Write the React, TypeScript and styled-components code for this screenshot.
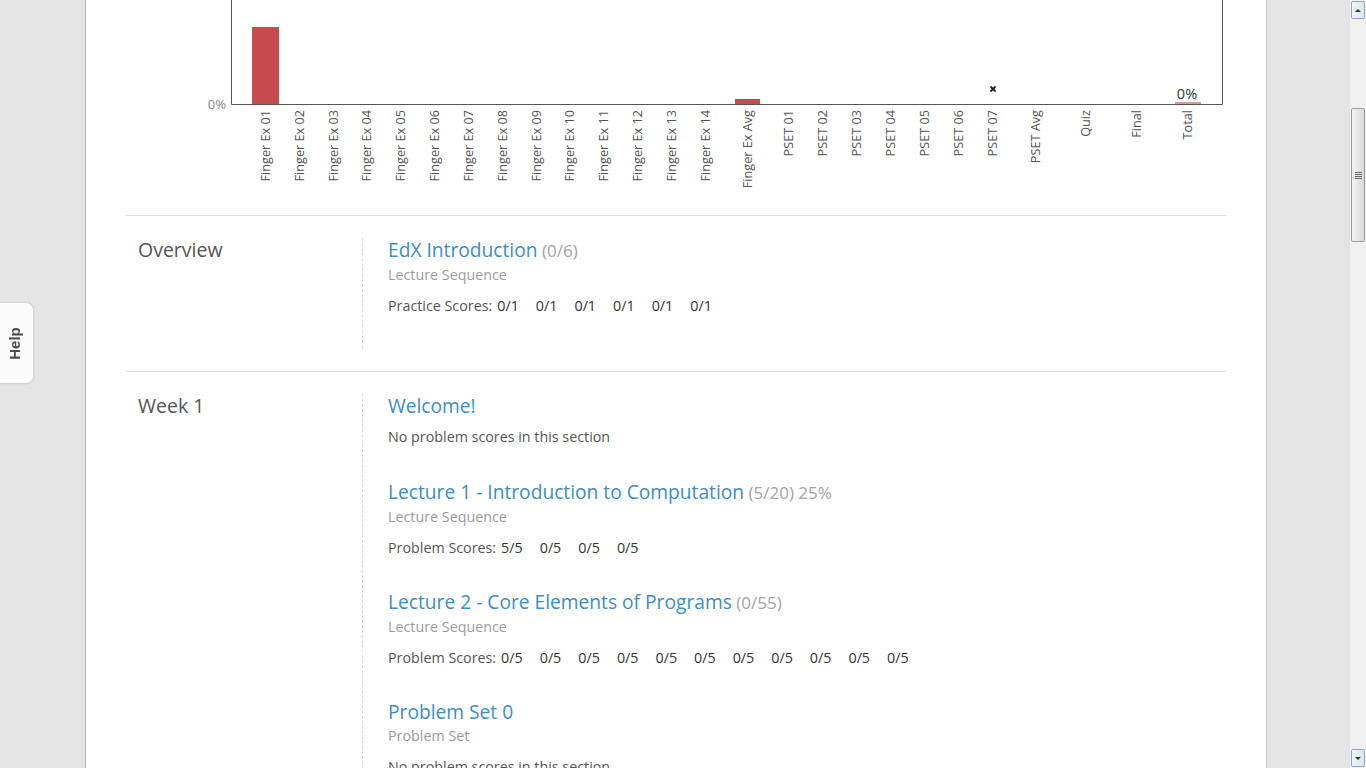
import {FC} from "react"
import styled, {createGlobalStyle} from "styled-components"

const GlobalStyle = createGlobalStyle`
    html, body {
        margin: 0;
        padding: 0;
        overflow: hidden;
        background: #e4e4e4;
        font-family: "Open Sans", "Liberation Sans", sans-serif;
    }
`

interface Score {
    label: string
    x: number
}

interface Item {
    title: string
    count?: string
    kind?: string
    scoreLabel?: string
    scores?: string[]
}

interface Chapter {
    name: string
    items: Item[]
}

const LABEL_X = [266, 300, 334, 367, 401, 435, 469, 503, 537, 570, 604, 638, 672, 706]
const PSET_X = [789, 823, 857, 891, 925, 959, 993]

const chartLabels: Score[] = [
    ...LABEL_X.map((x, i) => ({label: `Finger Ex ${String(i + 1).padStart(2, "0")}`, x})),
    {label: "Finger Ex Avg", x: 748},
    ...PSET_X.map((x, i) => ({label: `PSET 0${i + 1}`, x})),
    {label: "PSET Avg", x: 1036},
    {label: "Quiz", x: 1086},
    {label: "Final", x: 1137},
    {label: "Total", x: 1188},
]

const chapters: Chapter[] = [
    {
        name: "Overview",
        items: [
            {
                title: "EdX Introduction",
                count: "(0/6)",
                kind: "Lecture Sequence",
                scoreLabel: "Practice Scores:",
                scores: ["0/1", "0/1", "0/1", "0/1", "0/1", "0/1"]
            }
        ]
    },
    {
        name: "Week 1",
        items: [
            {title: "Welcome!"},
            {
                title: "Lecture 1 - Introduction to Computation",
                count: "(5/20) 25%",
                kind: "Lecture Sequence",
                scoreLabel: "Problem Scores:",
                scores: ["5/5", "0/5", "0/5", "0/5"]
            },
            {
                title: "Lecture 2 - Core Elements of Programs",
                count: "(0/55)",
                kind: "Lecture Sequence",
                scoreLabel: "Problem Scores:",
                scores: Array(11).fill("0/5")
            },
            {title: "Problem Set 0", kind: "Problem Set"}
        ]
    }
]

const Shell = styled.div`
    display: flex;
    height: 768px;
    width: 1366px;
    overflow: hidden;
`

const Viewport = styled.div`
    flex: 1;
    height: 768px;
    overflow: hidden;
`

const Panel = styled.main`
    margin-left: 85px;
    width: 1100px;
    min-height: 768px;
    background: #fff;
    border-left: 1px solid #b9b9b9;
    border-right: 1px solid #c6c6c6;
    padding: 0 40px;
    box-sizing: content-box;
`

const ChartBox = styled.div`
    height: 215px;
    border-bottom: 1px solid #e0e0e0;
`

const ChartSvg = styled.svg`
    display: block;
    font-family: "Open Sans", "Liberation Sans", sans-serif;
`

const Section = styled.section`
    display: grid;
    grid-template-columns: 236px 1fr;
    padding: 22px 0 23px;
    border-bottom: 1px solid #e0e0e0;
`

const ChapterName = styled.h2`
    margin: 0;
    padding-left: 12px;
    font-size: 19.5px;
    font-weight: 400;
    line-height: 24px;
    color: #555;
`

const Sequences = styled.div`
    display: flex;
    flex-direction: column;
    border-left: 1px dashed #d6d6d6;
    padding-left: 25px;
`

const Sequence = styled.div<{$plain?: boolean}>`
    display: flex;
    flex-direction: column;
    margin-bottom: ${p => (p.$plain ? 33 : 32)}px;
`

const Title = styled.h3`
    margin: 0;
    font-size: 19.2px;
    font-weight: 400;
    line-height: 24px;
    color: #3c8dc9;
`

const Count = styled.span`
    font-size: 17px;
    color: #a3a3a3;
`

const Kind = styled.p`
    margin: 0;
    font-size: 14.3px;
    line-height: 24px;
    color: #9b9b9b;
`

const ScoreLine = styled.div`
    display: flex;
    margin-top: 9px;
    font-size: 14.3px;
    line-height: 20px;
    color: #555;
    white-space: nowrap;
`

const ScoreLabel = styled.span`
    margin-right: 5px;
`

const ScoreValue = styled.span`
    color: #333;
    margin-right: 17px;
`

const HelpTab = styled.button`
    position: fixed;
    left: 0;
    top: 302px;
    width: 34px;
    height: 82px;
    padding: 0;
    background: #fbfbfb;
    border: 1px solid #d2d2d2;
    border-left: none;
    border-radius: 0 8px 8px 0;
    box-shadow: 0 0 2px rgba(0, 0, 0, 0.08);
    display: flex;
    align-items: center;
    justify-content: center;
`

const HelpText = styled.span`
    display: block;
    margin-left: -4px;
    transform: rotate(-90deg);
    font-family: "Liberation Sans", Arial, sans-serif;
    font-weight: 700;
    font-size: 15px;
    color: #4a4a4a;
`

const Scrollbar = styled.div`
    width: 17px;
    height: 768px;
    background: #f0f0f0;
    border-left: 1px solid #e2e2e2;
    box-sizing: border-box;
    display: flex;
    flex-direction: column;
`

const ScrollButton = styled.div<{$down?: boolean}>`
    height: 16px;
    margin: 1px 1px ${p => (p.$down ? "1px" : "0")};
    ${p => (p.$down ? "margin-top: auto;" : "")}
    border: 1px solid #8aa7c4;
    border-radius: 2px;
    background: linear-gradient(to right, #f3f6f9, #dce4ec);
    display: flex;
    align-items: center;
    justify-content: center;

    &::after {
        content: "";
        width: 0;
        height: 0;
        border-left: 3px solid transparent;
        border-right: 3px solid transparent;
        ${p => (p.$down ? "border-top: 3px solid #333;" : "border-bottom: 3px solid #333;")}
    }
`

const Thumb = styled.div`
    margin: 89px 1px 0;
    height: 132px;
    border: 1px solid #9a9a9a;
    border-radius: 2px;
    background: linear-gradient(to right, #f4f4f4, #dadada);
    display: flex;
    align-items: center;
    justify-content: center;
`

const Grip = styled.div`
    width: 7px;
    height: 7px;
    background: repeating-linear-gradient(to bottom, #666 0, #666 1px, transparent 1px, transparent 2px);
`

const Chart: FC = () => {
    const ox = 126
    return (
        <ChartSvg width="1100" height="215" viewBox="0 0 1100 215">
            <rect x={252 - ox} y="27" width="27" height="77" fill="#c64c4f"/>
            <rect x={735 - ox} y="99" width="25" height="5" fill="#c64c4f"/>
            <rect x={1175 - ox} y="102" width="26" height="2" fill="#d99a9b"/>
            <path d={`M${231.5 - ox} 0 V104.5 H${1222.5 - ox} V0`} fill="none" stroke="#555" strokeWidth="1"/>
            <text x={226 - ox} y="109" textAnchor="end" fontSize="13" fill="#888">0%</text>
            <text x={1187 - ox} y="99" textAnchor="middle" fontSize="14.5" fill="#333">0%</text>
            <path d={`M${990.5 - ox} 86.5 l5 5 M${995.5 - ox} 86.5 l-5 5`} stroke="#222" strokeWidth="1.8"/>
            {chartLabels.map(l => (
                <text
                    key={l.label}
                    x={l.x - ox + 4}
                    y={110}
                    textAnchor="end"
                    fontSize="12.7"
                    fill="#555"
                    transform={`rotate(-90 ${l.x - ox + 4} 110)`}
                >
                    {l.label}
                </text>
            ))}
        </ChartSvg>
    )
}

const App: FC = () => {
    return (
        <>
            <GlobalStyle/>
            <Shell>
                <Viewport>
                    <Panel>
                        <ChartBox>
                            <Chart/>
                        </ChartBox>
                        {chapters.map(ch => (
                            <Section key={ch.name}>
                                <ChapterName>{ch.name}</ChapterName>
                                <Sequences>
                                    {ch.items.map(item => (
                                        <Sequence key={item.title} $plain={!item.kind}>
                                            <Title>
                                                {item.title}
                                                {item.count && <Count> {item.count}</Count>}
                                            </Title>
                                            {item.kind && <Kind>{item.kind}</Kind>}
                                            <ScoreLine>
                                                {item.scores ? (
                                                    <>
                                                        <ScoreLabel>{item.scoreLabel}</ScoreLabel>
                                                        {item.scores.map((s, i) => (
                                                            <ScoreValue key={i}>{s}</ScoreValue>
                                                        ))}
                                                    </>
                                                ) : (
                                                    "No problem scores in this section"
                                                )}
                                            </ScoreLine>
                                        </Sequence>
                                    ))}
                                </Sequences>
                            </Section>
                        ))}
                    </Panel>
                </Viewport>
                <Scrollbar>
                    <ScrollButton/>
                    <Thumb><Grip/></Thumb>
                    <ScrollButton $down/>
                </Scrollbar>
            </Shell>
            <HelpTab><HelpText>Help</HelpText></HelpTab>
        </>
    )
}

export default App
